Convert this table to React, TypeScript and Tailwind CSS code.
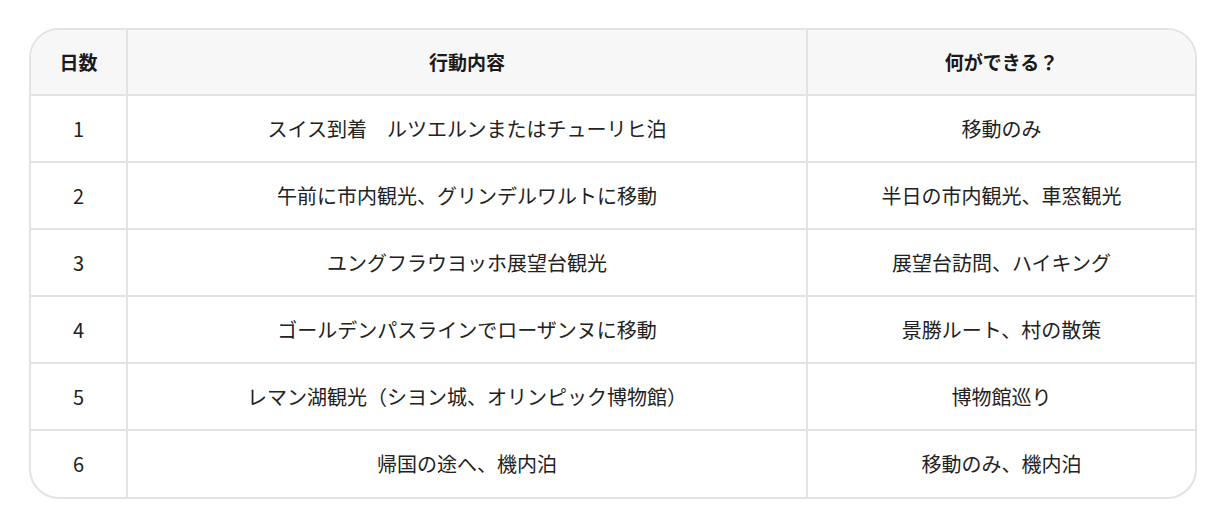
const rows = [
  { day: "1", action: "スイス到着　ルツエルンまたはチューリヒ泊", can: "移動のみ" },
  { day: "2", action: "午前に市内観光、グリンデルワルトに移動", can: "半日の市内観光、車窓観光" },
  { day: "3", action: "ユングフラウヨッホ展望台観光", can: "展望台訪問、ハイキング" },
  { day: "4", action: "ゴールデンパスラインでローザンヌに移動", can: "景勝ルート、村の散策" },
  { day: "5", action: "レマン湖観光（シヨン城、オリンピック博物館）", can: "博物館巡り" },
  { day: "6", action: "帰国の途へ、機内泊", can: "移動のみ、機内泊" },
];

export default function App() {
  return (
    <div
      className="min-h-[521px] w-[1232px] bg-white pl-[29px] pt-[28px]"
      style={{ fontFamily: '"Noto Sans CJK JP", "Noto Sans", sans-serif' }}
    >
      <div className="w-[1168px] overflow-hidden rounded-[30px] border-2 border-[#e3e3e3]">
        <table className="w-full border-collapse text-[20px] text-[#222]">
          <thead>
            <tr className="h-[65px] bg-[#f7f7f7]">
              <th className="w-[96px] border-r-2 border-b-2 border-[#e3e3e3] text-[19px] font-bold text-[#1a1a1a]">日数</th>
              <th className="w-[680px] border-r-2 border-b-2 border-[#e3e3e3] text-[19px] font-bold text-[#1a1a1a]">行動内容</th>
              <th className="border-b-2 border-[#e3e3e3] text-[19px] font-bold text-[#1a1a1a]">何ができる？</th>
            </tr>
          </thead>
          <tbody>
            {rows.map((r, i) => (
              <tr key={r.day} className="h-[67px]">
                <td className={`border-r-2 border-[#e3e3e3] text-center ${i < rows.length - 1 ? "border-b-2" : ""}`}>{r.day}</td>
                <td className={`border-r-2 border-[#e3e3e3] text-center ${i < rows.length - 1 ? "border-b-2" : ""}`}>{r.action}</td>
                <td className={`border-[#e3e3e3] text-center ${i < rows.length - 1 ? "border-b-2" : ""}`}>{r.can}</td>
              </tr>
            ))}
          </tbody>
        </table>
      </div>
    </div>
  );
}
